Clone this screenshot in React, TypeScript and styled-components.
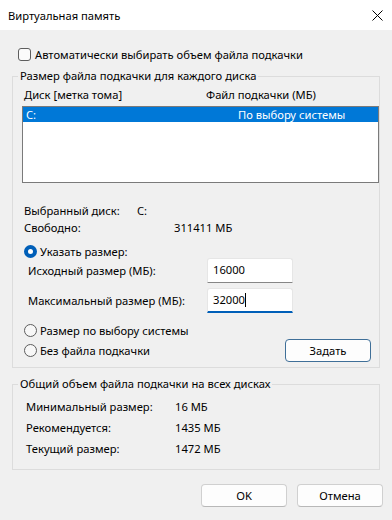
import React from 'react'
import styled, { createGlobalStyle } from 'styled-components'

const GlobalStyle = createGlobalStyle`
    body {
        margin: 0;
        font-family: "Noto Sans", "Open Sans", sans-serif;
        font-size: 11.2px;
        color: #000;
    }
`

const App = () => {
    return (
        <Window>
            <GlobalStyle />
            <TitleBar>
                <Title>Виртуальная память</Title>
                <svg width="11" height="11" viewBox="0 0 11 11">
                    <path d="M0.5 0.5 L10.5 10.5 M10.5 0.5 L0.5 10.5" stroke="#000" strokeWidth="1" fill="none" />
                </svg>
            </TitleBar>

            <CheckRow>
                <CheckBox />
                <span>Автоматически выбирать объем файла подкачки</span>
            </CheckRow>

            <Group bottom={5}>
                <Legend>Размер файла подкачки для каждого диска</Legend>
                <ListHeader>
                    <span>Диск [метка тома]</span>
                    <span>Файл подкачки (МБ)</span>
                </ListHeader>
                <ListBox>
                    <ListRow selected>
                        <span>C:</span>
                        <span>По выбору системы</span>
                    </ListRow>
                </ListBox>

                <InfoRow labelWidth={113} first>
                    <span>Выбранный диск:</span>
                    <span>C:</span>
                </InfoRow>
                <InfoRow labelWidth={150}>
                    <span>Свободно:</span>
                    <span>311411 МБ</span>
                </InfoRow>

                <RadioRow top={8}>
                    <Radio checked />
                    <span>Указать размер:</span>
                </RadioRow>
                <FieldRow>
                    <FieldLabel>Исходный размер (МБ):</FieldLabel>
                    <Field>16000</Field>
                </FieldRow>
                <FieldRow top={5}>
                    <FieldLabel>Максимальный размер (МБ):</FieldLabel>
                    <Field focused>32000<Caret /></Field>
                </FieldRow>

                <RadioRow top={10}>
                    <Radio />
                    <span>Размер по выбору системы</span>
                </RadioRow>
                <ActionRow>
                    <RadioRow>
                        <Radio />
                        <span>Без файла подкачки</span>
                    </RadioRow>
                    <Button isDefault>Задать</Button>
                </ActionRow>
            </Group>

            <Group bottom={10} top={8}>
                <Legend>Общий объем файла подкачки на всех дисках</Legend>
                <TotalList>
                    <TotalRow>
                        <span>Минимальный размер:</span>
                        <span>16 МБ</span>
                    </TotalRow>
                    <TotalRow>
                        <span>Рекомендуется:</span>
                        <span>1435 МБ</span>
                    </TotalRow>
                    <TotalRow>
                        <span>Текущий размер:</span>
                        <span>1472 МБ</span>
                    </TotalRow>
                </TotalList>
            </Group>

            <Footer>
                <Button>OK</Button>
                <Button>Отмена</Button>
            </Footer>
        </Window>
    )
}

export default App

const Window = styled.div`
    width: 392px;
    height: 520px;
    background: #f0f0f0;
    display: flex;
    flex-direction: column;
    overflow: hidden;
`

const TitleBar = styled.div`
    height: 30px;
    flex-shrink: 0;
    background: #fff;
    display: flex;
    align-items: center;
    justify-content: space-between;
    padding: 0 9px 0 8px;
`

const Title = styled.span`
    font-size: 11.2px;
`

const CheckRow = styled.label`
    display: flex;
    align-items: center;
    gap: 4px;
    height: 14px;
    margin-top: 17px;
    padding-left: 18px;
`

const CheckBox = styled.span`
    width: 13px;
    height: 13px;
    box-sizing: border-box;
    border: 1px solid #5d5d5d;
    border-radius: 3px;
    background: #fbfbfb;
`

const Group = styled.fieldset<{ bottom: number; top?: number }>`
    margin: ${p => p.top ?? 7}px 12px 0 12px;
    padding: 0 0 ${p => p.bottom}px 9px;
    border: 1px solid #dcdcdc;
    min-inline-size: 0;
`

const Legend = styled.legend`
    padding: 0 2px;
    margin-left: -4px;
    line-height: 16px;
`

const ListHeader = styled.div`
    display: grid;
    grid-template-columns: 182px 1fr;
    padding-left: 2px;
    margin-top: 3px;
    line-height: 16px;
`

const ListBox = styled.div`
    margin-top: 3px;
    height: 77px;
    box-sizing: border-box;
    border: 1px solid #7a7a7a;
    background: #fff;
`

const ListRow = styled.div<{ selected?: boolean }>`
    display: grid;
    grid-template-columns: 212px 1fr;
    padding-left: 3px;
    height: 15px;
    line-height: 15px;
    background: ${p => p.selected ? '#0078d7' : 'transparent'};
    color: ${p => p.selected ? '#fff' : '#000'};
`

const InfoRow = styled.div<{ labelWidth: number; first?: boolean }>`
    display: grid;
    grid-template-columns: ${p => p.labelWidth}px 1fr;
    padding-left: 2px;
    line-height: 17px;
    margin-top: ${p => p.first ? 19 : 0}px;
`

const RadioRow = styled.label<{ top?: number }>`
    display: flex;
    align-items: center;
    gap: 3px;
    height: 14px;
    padding-left: 2px;
    margin-top: ${p => p.top ?? 0}px;
`

const Radio = styled.span<{ checked?: boolean }>`
    width: 13px;
    height: 13px;
    box-sizing: border-box;
    border-radius: 50%;
    border: ${p => p.checked ? '4px solid #005fb8' : '1px solid #5d5d5d'};
    background: ${p => p.checked ? '#fff' : '#f7f7f7'};
`

const FieldRow = styled.div<{ top?: number }>`
    display: flex;
    align-items: center;
    height: 25px;
    padding-left: 6px;
    margin-top: ${p => p.top ?? 0}px;
`

const FieldLabel = styled.span`
    width: 179px;
`

const Field = styled.div<{ focused?: boolean }>`
    width: 86px;
    height: 25px;
    box-sizing: border-box;
    display: flex;
    align-items: center;
    padding: 0 0 ${p => p.focused ? 1 : 2}px 5px;
    background: #fff;
    border: 1px solid #e6e6e6;
    border-bottom: ${p => p.focused ? '2px solid #005fb8' : '1px solid #868686'};
    border-radius: 3px 3px 0 0;
`

const Caret = styled.span`
    width: 1px;
    height: 14px;
    background: #000;
`

const ActionRow = styled.div`
    display: flex;
    align-items: center;
    justify-content: space-between;
    height: 23px;
    margin-top: 2px;
    padding-right: 8px;
`

const Button = styled.button<{ isDefault?: boolean }>`
    width: 86px;
    height: 23px;
    padding: 0;
    font-family: inherit;
    font-size: 11.2px;
    color: #000;
    background: #fdfdfd;
    border: 1px solid ${p => p.isDefault ? '#3f6f98' : '#d0d0d0'};
    border-bottom-color: ${p => p.isDefault ? '#3f6f98' : '#b8b8b8'};
    border-radius: 4px;
`

const TotalList = styled.div`
    margin-top: 4px;
    padding-left: 4px;
`

const TotalRow = styled.div`
    display: grid;
    grid-template-columns: 149px 1fr;
    line-height: 21px;
`

const Footer = styled.div`
    display: flex;
    justify-content: flex-end;
    gap: 10px;
    margin-top: 14px;
    padding-right: 9px;
`
